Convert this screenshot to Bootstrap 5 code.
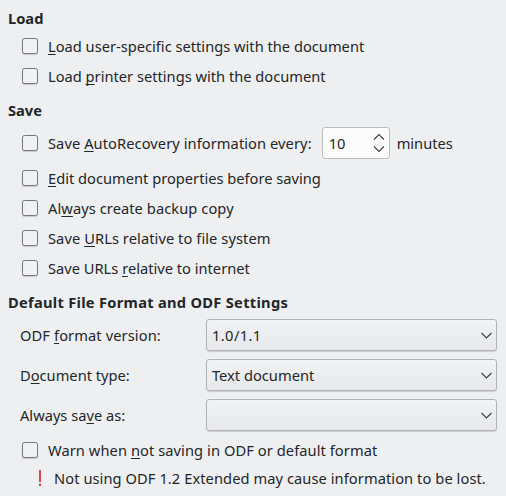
<!DOCTYPE html>
<html lang="en">
<head>
<meta charset="utf-8">
<meta name="viewport" content="width=device-width, initial-scale=1">
<title>Load/Save - General</title>
<link href="https://cdn.jsdelivr.net/npm/bootstrap@5.3.0/dist/css/bootstrap.min.css" rel="stylesheet">
<style>
  body { background: #eeeff1; color: #232629; font: 14.667px/20px "Noto Sans", sans-serif; overflow: hidden; }
  .panel { height: 496px; padding: 8px 9px 0 8px; }
  .group-title { font-size: 14.667px; line-height: 20px; margin: 0 0 3px; color: #232629; }
  .group-title.next { margin-top: 9px; }
  .option-row { height: 30px; padding-left: 14px; }
  .option-row.tall { height: 40px; }
  .field-row { height: 40px; padding-left: 12px; }
  .field-row label { width: 186px; }
  .option-row .form-check-input { flex: none; width: 16px; height: 16px; margin: 0 10px 0 0; border: 1px solid #75777a; border-radius: 2.5px; background: #f0f1f2; box-shadow: 0 1px 1px rgba(0,0,0,.16); }
  u { text-decoration-thickness: 1px; text-underline-offset: 2px; text-decoration-skip-ink: none; }
  .combo { width: 291px; height: 32px; padding: 0 4.5px 0 5px; border: 1px solid #b1b3b5; border-radius: 3px; background: linear-gradient(#f1f2f3, #e7e8ea); box-shadow: 0 1px 1px rgba(0,0,0,.15); color: #232629; line-height: 20px; font-size: 14.667px; }
  .spin { width: 68px; height: 32px; margin-left: 10px; margin-right: 7px; padding: 0 4px 0 6px; border: 1px solid #bbbdbf; border-radius: 3px; background: #fcfcfc; }
  .glyph { fill: none; stroke: #3c3f42; stroke-width: 1.1; }
  .notice { padding: 3px 0 0 31px; gap: 13px; }
  .track-1 { letter-spacing: .07px; }
  .track-2 { letter-spacing: .1px; }
  .track-3 { letter-spacing: .28px; }
  .track-4 { letter-spacing: .4px; }
</style>
</head>
<body>
<main class="panel">
  <h2 class="group-title fw-bold">Load</h2>
  <div class="option-row d-flex align-items-center"><input class="form-check-input" type="checkbox" id="user"><label for="user"><u>L</u>oad user-specific settings with the document</label></div>
  <div class="option-row d-flex align-items-center"><input class="form-check-input" type="checkbox" id="printer"><label for="printer">Load <u>p</u>rinter settings with the document</label></div>

  <h2 class="group-title next fw-bold">Save</h2>
  <div class="option-row tall d-flex align-items-center">
    <input class="form-check-input" type="checkbox" id="auto"><label for="auto" class="track-1">Save <u>A</u>utoRecovery information every:</label>
    <div class="spin d-flex align-items-center justify-content-between">
      <span>10</span>
      <svg class="glyph" width="12" height="20" viewBox="0 0 12 20"><path d="M1 6.5 6 1.5l5 5M1 13.5l5 5 5-5"/></svg>
    </div>
    <span>minutes</span>
  </div>
  <div class="option-row d-flex align-items-center"><input class="form-check-input" type="checkbox" id="edit"><label for="edit"><u>E</u>dit document properties before saving</label></div>
  <div class="option-row d-flex align-items-center"><input class="form-check-input" type="checkbox" id="backup"><label for="backup" class="track-1">Al<u>w</u>ays create backup copy</label></div>
  <div class="option-row d-flex align-items-center"><input class="form-check-input" type="checkbox" id="fs"><label for="fs" class="track-1">Save <u>U</u>RLs relative to file system</label></div>
  <div class="option-row d-flex align-items-center"><input class="form-check-input" type="checkbox" id="net"><label for="net">Save URLs <u>r</u>elative to internet</label></div>

  <h2 class="group-title next fw-bold track-3">Default File Format and ODF Settings</h2>
  <div class="field-row d-flex align-items-center"><label class="track-2">ODF <u>f</u>ormat version:</label>
    <button type="button" class="combo d-flex align-items-center justify-content-between"><span class="track-4">1.0/1.1</span><svg class="glyph" width="11" height="7" viewBox="0 0 11 7"><path d="M.5 1l5 5 5-5"/></svg></button></div>
  <div class="field-row d-flex align-items-center"><label>D<u>o</u>cument type:</label>
    <button type="button" class="combo d-flex align-items-center justify-content-between"><span>Text document</span><svg class="glyph" width="11" height="7" viewBox="0 0 11 7"><path d="M.5 1l5 5 5-5"/></svg></button></div>
  <div class="field-row d-flex align-items-center"><label>Always sa<u>v</u>e as:</label>
    <button type="button" class="combo d-flex align-items-center justify-content-between"><span></span><svg class="glyph" width="11" height="7" viewBox="0 0 11 7"><path d="M.5 1l5 5 5-5"/></svg></button></div>
  <div class="option-row d-flex align-items-center"><input class="form-check-input" type="checkbox" id="warn"><label for="warn" class="track-1">Warn when <u>n</u>ot saving in ODF or default format</label></div>
  <div class="notice d-flex align-items-center text-nowrap">
    <svg width="2" height="16" viewBox="0 0 2 16"><path fill="#da4453" d="M0 0h2v12H0zM0 13.5h2V16H0z"/></svg>
    <span class="track-1">Not using ODF 1.2 Extended may cause information to be lost.</span>
  </div>
</main>
<script src="https://cdn.jsdelivr.net/npm/bootstrap@5.3.0/dist/js/bootstrap.bundle.min.js"></script>
</body>
</html>
